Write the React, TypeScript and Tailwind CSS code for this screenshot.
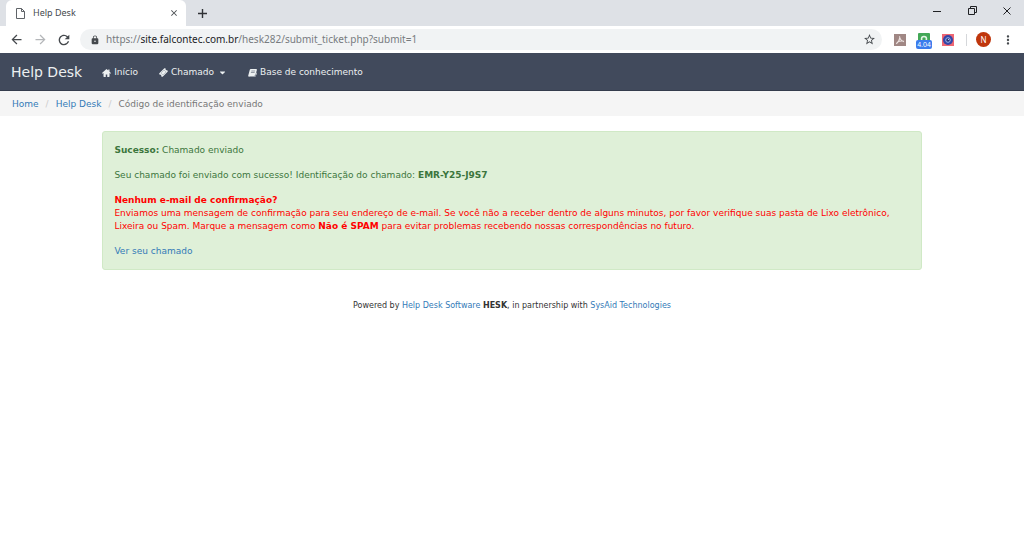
import type { ReactNode } from "react";
import { FaCaretDown } from "react-icons/fa";
import { MdArrowBack, MdArrowForward, MdClose, MdLock, MdMoreVert, MdRefresh, MdStarBorder } from "react-icons/md";

function HomeIcon() {
  return (
    <svg viewBox="0 0 18 16" className="h-2 w-[9px]" fill="currentColor" aria-hidden>
      <path d="M9 0 0 8l1.300 1.500L3 8.200V15c0 .5.400 1 1 1h3.500v-5h3v5H14c.6 0 1-.5 1-1V8.200l1.700 1.300L18 8l-3-2.700V1h-2.500v2.100z" />
    </svg>
  );
}

function TicketIcon() {
  return (
    <svg viewBox="0 0 16 16" className="size-[9px]" fill="currentColor" aria-hidden>
      <path d="M9.500.6c.5-.5 1.100-.5 1.600 0l1 1c-.6.800-.5 1.500 0 2s1.300.6 2 .1l1.200 1.200c.5.500.5 1.100 0 1.600L6.500 15.400c-.5.500-1.100.5-1.600 0l-1.200-1.200c.6-.7.500-1.500 0-2s-1.300-.6-2 0L.6 11.100c-.5-.5-.5-1.100 0-1.600z" />
      <path d="M9 3.600 3.600 9 7 12.400 12.400 7z" fill="none" stroke="#414a5c" strokeWidth=".5" />
    </svg>
  );
}

function BookIcon() {
  return (
    <svg viewBox="0 0 18 16" className="h-2 w-[9px]" fill="currentColor" aria-hidden>
      <path
        d="M5.500 0h10.800c1.200 0 1.900.9 1.500 2.100l-3 10c-.3 1-1.200 1.700-2.300 1.700H3.200c-.5 0-.7.3-.5.700.1.300.4.400.9.400h9.500c.9 0 1.700-.6 2-1.400l2-6.500c.8.500 1 1 .7 1.900L15.300 14.500c-.3.900-1.200 1.500-2.200 1.500H3C1.200 16 0 14.600.5 13L3.600 1.700C3.900.7 4.600 0 5.500 0zM6.800 3.400l-.4 1.200h7.500l.4-1.200zM6 6l-.4 1.200h7.500L13.500 6z"
        fillRule="evenodd"
      />
    </svg>
  );
}

function FileIcon() {
  return (
    <svg viewBox="0 0 9 11" className="h-[11px] w-[9px]" fill="none" stroke="#5f6368" aria-hidden>
      <path d="M.5.5h5l3 3v7h-8zM5.500.5v3h3" />
    </svg>
  );
}

function RestoreIcon() {
  return (
    <svg viewBox="0 0 9 9" className="size-[9px]" fill="none" stroke="#202124" aria-hidden>
      <path d="M2.500 2V.5h6v6H7M.5 2.500h6v6h-6z" />
    </svg>
  );
}

function PdfIcon() {
  return (
    <svg viewBox="0 0 12 12" className="size-3" aria-hidden>
      <path fill="#a08784" d="M0 0h12v12H0z" />
      <path
        d="M5.500 2.200c.3 2.500 1.300 4.500 4.500 5.600M5.800 3.500C5.400 6 4.200 8.500 2.200 9.800M3.300 8c2-.9 4.300-1.200 6.700-.8"
        fill="none"
        stroke="#eee5e3"
        strokeWidth="1.100"
      />
    </svg>
  );
}

function CameraIcon() {
  return (
    <svg viewBox="0 0 12 12" className="size-3" aria-hidden>
      <path fill="#ef6672" d="M0 0h12v12H0z" />
      <circle cx="6" cy="6" r="5" fill="#3346a8" />
      <circle cx="6" cy="6" r="2.300" fill="#253079" stroke="#9db8ef" />
      <circle cx="6.500" cy="5.500" r=".6" fill="#dce8ff" />
    </svg>
  );
}

function ToolButton({ label, className = "", children }: { label: string; className?: string; children: ReactNode }) {
  return (
    <button type="button" aria-label={label} className={`flex size-4 items-center justify-center ${className}`}>
      {children}
    </button>
  );
}

function TabStrip() {
  return (
    <div className="flex h-[26px] items-stretch bg-[#dee1e6] pl-[6px]">
      <div className="flex w-[180px] items-center rounded-t-md bg-white pr-1 pl-[10px]">
        <FileIcon />
        <span className="ml-2 flex-1 font-['Noto_Sans',sans-serif] text-[9px] text-[#45494d]">Help Desk</span>
        <ToolButton label="Close tab" className="text-[#45494d]">
          <MdClose size={10} />
        </ToolButton>
      </div>
      <ToolButton label="New tab" className="mt-[5px] ml-2 text-[#303236]">
        <svg viewBox="0 0 9 9" className="size-[9px]" stroke="currentColor" strokeWidth="1.400" aria-hidden>
          <path d="M4.500 0v9M0 4.500h9" />
        </svg>
      </ToolButton>
      <div className="ml-auto flex h-[21px] items-center gap-[19px] pr-[9px]">
        <ToolButton label="Minimize">
          <svg viewBox="0 0 8 8" className="size-2" stroke="#202124" aria-hidden>
            <path d="M0 4.500h8" />
          </svg>
        </ToolButton>
        <ToolButton label="Restore">
          <RestoreIcon />
        </ToolButton>
        <ToolButton label="Close">
          <svg viewBox="0 0 8 8" className="size-2" stroke="#202124" aria-hidden>
            <path d="M.5.5l7 7M7.500.5l-7 7" />
          </svg>
        </ToolButton>
      </div>
    </div>
  );
}

function AddressBar() {
  return (
    <div className="flex h-[27px] items-center bg-white px-2 text-[#45494d]">
      <div className="flex gap-2">
        <ToolButton label="Back">
          <MdArrowBack size={15} />
        </ToolButton>
        <ToolButton label="Forward" className="text-[#b4b6b9]">
          <MdArrowForward size={15} />
        </ToolButton>
        <ToolButton label="Reload">
          <MdRefresh size={16} />
        </ToolButton>
      </div>
      <div className="ml-2 flex h-[21px] flex-1 items-center rounded-full bg-[#f1f3f4] pr-[5px] pl-[10px]">
        <MdLock size={10} />
        <div className="ml-[6px] flex-1 font-['Noto_Sans',sans-serif] text-[10px] text-[#777b7f]">
          https://<span className="text-[#202124]">site.falcontec.com.br</span>/hesk282/submit_ticket.php?submit=1
        </div>
        <ToolButton label="Bookmark">
          <MdStarBorder size={13} />
        </ToolButton>
      </div>
      <div className="ml-[10px] flex items-center gap-2">
        <ToolButton label="PDF">
          <PdfIcon />
        </ToolButton>
        <button type="button" aria-label="Timer" className="relative flex size-4 justify-center">
          <svg viewBox="0 0 12 12" className="mt-px size-3" aria-hidden>
            <rect width="12" height="12" rx="1" fill="#43a857" />
            <circle cx="6" cy="6" r="2.500" fill="none" stroke="#e5f6e7" strokeWidth="1.500" />
          </svg>
          <span className="absolute top-2 rounded-xs bg-[#3b7ded] px-px font-['Liberation_Sans',sans-serif] text-[7px] leading-[9px] text-white">
            4.04
          </span>
        </button>
        <ToolButton label="Capture">
          <CameraIcon />
        </ToolButton>
      </div>
      <div className="ml-[10px] h-3 w-px bg-[#d5d7da]" />
      <button
        type="button"
        className="ml-[9px] flex size-[15px] items-center justify-center rounded-full bg-[#bf360c] font-['Noto_Sans',sans-serif] text-[8px] text-white"
      >
        N
      </button>
      <ToolButton label="Menu" className="ml-[9px]">
        <MdMoreVert size={14} />
      </ToolButton>
    </div>
  );
}

function Navbar() {
  return (
    <nav className="flex h-[38px] items-center border-b border-[#343c4c] bg-[#414a5c] pt-[2px] pl-[11px] text-[9px] text-[#ecf0f1]">
      <a href="#" className="text-[14px]">
        Help Desk
      </a>
      <div className="ml-5 flex gap-[21px]">
        <a href="#" className="flex items-center gap-[3px]">
          <HomeIcon />
          Início
        </a>
        <a href="#" className="flex items-center gap-[3px]">
          <TicketIcon />
          Chamado
          <FaCaretDown size={9} className="ml-px" />
        </a>
        <a href="#" className="flex items-center gap-[3px]">
          <BookIcon />
          Base de conhecimento
        </a>
      </div>
    </nav>
  );
}

function Breadcrumb() {
  return (
    <ol className="flex h-[25px] items-center gap-[7px] bg-[#f5f5f5] pt-[2px] pl-3 text-[9px] text-[#777]">
      <li>
        <a href="#" className="text-[#337ab7]">
          Home
        </a>
      </li>
      <li className="text-[#ccc]">/</li>
      <li>
        <a href="#" className="text-[#337ab7]">
          Help Desk
        </a>
      </li>
      <li className="text-[#ccc]">/</li>
      <li>Código de identificação enviado</li>
    </ol>
  );
}

export default function App() {
  return (
    <div className="min-h-screen bg-white font-['DejaVu_Sans',sans-serif]">
      <TabStrip />
      <AddressBar />
      <Navbar />
      <Breadcrumb />
      <main className="mx-auto mt-[15px] flex w-4/5 flex-col gap-3 rounded-[3px] border border-[#d0e9c6] bg-[#dff0d8] px-[11px] pt-3 pb-[11px] text-[9px] leading-[13px] text-[#3c763d]">
        <p>
          <b>Sucesso:</b> Chamado enviado
        </p>
        <p>
          Seu chamado foi enviado com sucesso! Identificação do chamado: <b>EMR-Y25-J9S7</b>
        </p>
        <div className="text-[#f00]">
          <p>
            <b>Nenhum e-mail de confirmação?</b>
          </p>
          <p>
            Enviamos uma mensagem de confirmação para seu endereço de e-mail. Se você não a receber dentro de alguns
            minutos, por favor verifique suas pasta de Lixo eletrônico, Lixeira ou Spam. Marque a mensagem como{" "}
            <b>Não é SPAM</b> para evitar problemas recebendo nossas correspondências no futuro.
          </p>
        </div>
        <p>
          <a href="#" className="text-[#337ab7]">
            Ver seu chamado
          </a>
        </p>
      </main>
      <footer className="mt-[31px] text-center text-[8px] leading-[10px] text-[#333]">
        Powered by{" "}
        <a href="#" className="text-[#337ab7]">
          Help Desk Software
        </a>{" "}
        <b>HESK</b>, in partnership with{" "}
        <a href="#" className="text-[#337ab7]">
          SysAid Technologies
        </a>
      </footer>
    </div>
  );
}
